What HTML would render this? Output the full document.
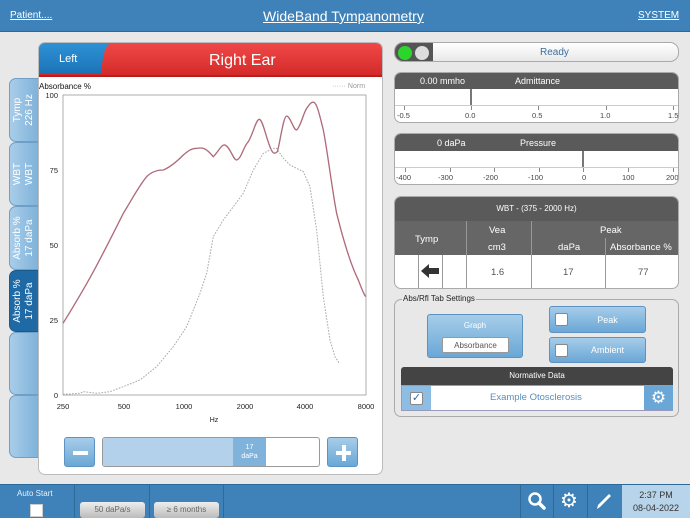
<!DOCTYPE html>
<html><head><meta charset="utf-8"><style>
*{box-sizing:border-box;margin:0;padding:0}
body{width:690px;height:518px;background:#e8e8e8;font-family:"Liberation Sans",sans-serif;position:relative;overflow:hidden;font-size:9px;color:#333}
.a{position:absolute}
.hdr{left:0;top:0;width:690px;height:32px;background:#3f82b9;border-bottom:1px solid #2b6896}
.hdr span{position:absolute;color:#fff;text-decoration:underline}
.tab{position:absolute;left:9px;width:30px;background:linear-gradient(90deg,#a9cde9,#7fb2da);border:1px solid #6f9fc6;border-radius:7px 0 0 7px;color:#fff;font-size:10px}
.tab div{position:absolute;left:50%;top:50%;transform:translate(-50%,-50%) rotate(-90deg);white-space:nowrap;text-align:center;line-height:12px}
.box{position:absolute;left:394px;width:285px;border:1px solid #aaa;border-radius:7px;background:#fff;overflow:hidden}
.dk{background:#5a5a5a;color:#fff}
.btn{position:absolute;background:linear-gradient(#a6cde9,#6aa7d6);border:1px solid #5c93c2;border-radius:3px;color:#fff;text-align:center}
.cb{position:absolute;width:13px;height:13px;background:#fff;border:1px solid #888;border-radius:2px}
.bb{background:#3f82b9}
.tk{position:absolute;top:0;width:1px;height:4px;background:#888}
</style></head><body>
<div class="a hdr"><span style="left:10px;top:10px;font-size:10px">Patient....</span><span style="left:263px;top:8px;font-size:14px">WideBand Tympanometry</span><span style="left:638px;top:10px;font-size:10px">SYSTEM</span></div>

<div class="tab" style="top:78px;height:64px"><div>Tymp<br>226 Hz</div></div>
<div class="tab" style="top:142px;height:64px"><div>WBT<br>WBT</div></div>
<div class="tab" style="top:206px;height:64px"><div>Absorb %<br>17 daPa</div></div>
<div class="tab" style="top:270px;height:62px;background:#1f6aa5;border-color:#1a5a8c"><div>Absorb %<br>17 daPa</div></div>
<div class="tab" style="top:332px;height:63px"><div></div></div>
<div class="tab" style="top:395px;height:63px"><div></div></div>

<div class="a" style="left:38px;top:42px;width:345px;height:433px;background:#fff;border:1px solid #bbb;border-radius:7px;overflow:hidden">
 <div class="a" style="left:0;top:0;width:345px;height:34px;background:linear-gradient(#f04848,#d42a2a);border-bottom:2px solid #b81e1e"></div>
 <svg class="a" style="left:0;top:0" width="100" height="32"><defs><linearGradient id="g" x1="0" y1="0" x2="0" y2="1"><stop offset="0" stop-color="#2f92d6"/><stop offset="1" stop-color="#1c74b8"/></linearGradient></defs><path d="M0,0 L72,0 C66,2 64,12 62,30 L0,30 Z" fill="url(#g)"/></svg>
 <div class="a" style="left:20px;top:10px;color:#fff;font-size:11px">Left</div>
 <div class="a" style="left:170px;top:9px;color:#fff;font-size:16px">Right Ear</div>
</div>

<div class="a" style="left:39px;top:82px;font-size:8px;color:#111">Absorbance %</div>
<div class="a" style="left:332px;top:83px;font-size:7px;color:#999">······ Norm</div>
<svg class="a" style="left:0;top:0" width="690" height="518">
<g font-family="Liberation Sans" font-size="7.5" fill="#222">
<rect x="63" y="95" width="303" height="300" fill="#fff" stroke="#999" stroke-width="0.8"/>
<text x="58" y="98" text-anchor="end">100</text><text x="58" y="173" text-anchor="end">75</text><text x="58" y="248" text-anchor="end">50</text><text x="58" y="323" text-anchor="end">25</text><text x="58" y="398" text-anchor="end">0</text>
<text x="63" y="409" text-anchor="middle">250</text><text x="124" y="409" text-anchor="middle">500</text><text x="184" y="409" text-anchor="middle">1000</text><text x="245" y="409" text-anchor="middle">2000</text><text x="305" y="409" text-anchor="middle">4000</text><text x="366" y="409" text-anchor="middle">8000</text>
<text x="214" y="422" text-anchor="middle" font-size="7">Hz</text>
</g>
<g transform="translate(40,80) scale(0.3333)" fill="none">
<path d="M69,730 C100,680 130,630 160,575 C190,520 220,460 250,400 C275,360 295,320 320,290 C335,275 350,270 370,270 C390,262 410,245 430,225 C445,212 455,205 470,205 C485,203 495,200 520,230 C535,215 545,192 555,195 C570,200 580,240 590,240 C605,235 610,200 625,185 C640,160 648,118 658,118 C668,120 675,160 688,195 C698,225 705,222 712,215 C720,190 730,108 740,108 C752,110 760,150 770,150 C782,140 790,100 800,85 C810,70 815,65 822,67 C832,72 840,110 850,150 C862,210 875,320 890,400 C910,480 935,560 955,600 C965,625 970,640 977,650" stroke="#b06a7a" stroke-width="4"/>
<path d="M69,943 L120,940 L130,935 L170,940 L210,935 L250,920 L300,900 L350,860 L400,800 L440,740 L480,640 L500,580 L520,470 L550,420 L580,380 L610,340 L640,270 L670,220 L700,205 L710,205 L730,235 L750,255 L790,275 L810,320 L830,450 L850,650 L870,780 L885,830 L898,850" stroke="#aaa" stroke-width="3" stroke-dasharray="5,4"/>
</g>
</svg>

<div class="btn" style="left:64px;top:437px;width:31px;height:30px"><div class="a" style="left:8px;top:13px;width:15px;height:4px;background:#fff"></div></div>
<div class="a" style="left:102px;top:437px;width:218px;height:30px;background:#fff;border:1px solid #999;border-radius:3px;overflow:hidden"><div class="a" style="left:0;top:0;width:130px;height:30px;background:#b3d1ea"></div><div class="a" style="left:130px;top:0;width:33px;height:30px;background:#80b3dc;color:#fff;font-size:7px;text-align:center;padding-top:5px;line-height:9px">17<br>daPa</div></div>
<div class="btn" style="left:327px;top:437px;width:31px;height:30px"><div class="a" style="left:8px;top:13px;width:15px;height:4px;background:#fff"></div><div class="a" style="left:13.5px;top:7px;width:4px;height:16px;background:#fff"></div></div>

<div class="box" style="top:42px;height:20px;border-radius:9px;background:linear-gradient(#fff,#e8e8e8)"><div class="a" style="left:0;top:0;width:38px;height:20px;background:#555"></div><div class="a" style="left:3px;top:3px;width:14px;height:14px;border-radius:50%;background:#2bd52b"></div><div class="a" style="left:20px;top:3px;width:14px;height:14px;border-radius:50%;background:#ddd"></div><div class="a" style="left:145px;top:4px;color:#3a6ea0;font-size:10px">Ready</div></div>

<div class="box" style="top:72px;height:51px"><div class="dk" style="height:16px;position:relative"><span class="a" style="left:25px;top:3px">0.00 mmho</span><span class="a" style="left:120px;top:3px">Admittance</span></div><div class="a" style="left:0;top:32px;width:285px;height:1px;background:#ccc"></div><div class="a" style="left:75px;top:16px;width:2px;height:16px;background:#777"></div>
<div class="a" style="left:0;top:33px;width:285px;height:5px"><div class="tk" style="left:9px"></div><div class="tk" style="left:76px"></div><div class="tk" style="left:143px"></div><div class="tk" style="left:211px"></div><div class="tk" style="left:278px"></div></div>
<div class="a" style="top:38px;left:2px;width:282px;font-size:7.5px;color:#444"><span class="a" style="left:0">-0.5</span><span class="a" style="left:68px">0.0</span><span class="a" style="left:135px">0.5</span><span class="a" style="left:203px">1.0</span><span class="a" style="left:271px">1.5</span></div></div>

<div class="box" style="top:133px;height:52px"><div class="dk" style="height:17px;position:relative"><span class="a" style="left:42px;top:4px">0 daPa</span><span class="a" style="left:125px;top:4px">Pressure</span></div><div class="a" style="left:0;top:33px;width:285px;height:1px;background:#ccc"></div><div class="a" style="left:187px;top:17px;width:2px;height:16px;background:#777"></div>
<div class="a" style="left:0;top:34px;width:285px;height:5px"><div class="tk" style="left:10px"></div><div class="tk" style="left:55px"></div><div class="tk" style="left:99px"></div><div class="tk" style="left:144px"></div><div class="tk" style="left:188px"></div><div class="tk" style="left:233px"></div><div class="tk" style="left:278px"></div></div>
<div class="a" style="top:39px;left:1px;width:282px;font-size:7.5px;color:#444"><span class="a" style="left:0">-400</span><span class="a" style="left:42px">-300</span><span class="a" style="left:87px">-200</span><span class="a" style="left:132px">-100</span><span class="a" style="left:186px">0</span><span class="a" style="left:226px">100</span><span class="a" style="left:270px">200</span></div></div>

<div class="box" style="top:196px;height:93px;font-size:9.5px">
<div class="dk" style="height:24px;text-align:center;padding-top:7px;font-size:8px">WBT - (375 - 2000 Hz)</div>
<div class="dk a" style="left:0;top:24px;width:285px;height:34px;background:#666"></div>
<div class="a" style="left:20px;top:37px;color:#fff">Tymp</div>
<div class="a" style="left:71px;top:24px;width:1px;height:69px;background:#999"></div>
<div class="a" style="left:136px;top:24px;width:1px;height:69px;background:#999"></div>
<div class="a" style="left:210px;top:41px;width:1px;height:52px;background:#999"></div>
<div class="a" style="left:23px;top:58px;width:1px;height:35px;background:#999"></div>
<div class="a" style="left:47px;top:58px;width:1px;height:35px;background:#999"></div>
<div class="a" style="left:94px;top:28px;color:#fff">Vea</div><div class="a" style="left:93px;top:45px;color:#fff">cm3</div>
<div class="a" style="left:205px;top:28px;color:#fff">Peak</div><div class="a" style="left:163px;top:45px;color:#fff">daPa</div><div class="a" style="left:215px;top:45px;color:#fff">Absorbance %</div>
<svg class="a" style="left:25px;top:66px" width="20" height="16"><path d="M1,8 L9,1 L9,5 L19,5 L19,11 L9,11 L9,15 Z" fill="#333"/></svg>
<div class="a" style="left:96px;top:70px;color:#555">1.6</div><div class="a" style="left:168px;top:70px;color:#555">17</div><div class="a" style="left:243px;top:70px;color:#555">77</div></div>

<div class="a" style="left:394px;top:299px;width:285px;height:118px;border:1px solid #aaa;border-radius:7px"></div>
<div class="a" style="left:402px;top:294px;background:#e8e8e8;font-size:8px;color:#222;padding:0 1px">Abs/Rfl Tab Settings</div>
<div class="btn" style="left:427px;top:314px;width:96px;height:44px"><div style="margin-top:6px;font-size:8px">Graph</div><div class="a" style="left:14px;top:22px;width:67px;height:16px;background:#fff;border:1px solid #999;border-radius:2px;color:#555;font-size:8px;padding-top:3px">Absorbance</div></div>
<div class="btn" style="left:549px;top:306px;width:97px;height:27px"><div class="cb" style="left:5px;top:6px"></div><div style="margin-top:8px;padding-left:20px;font-size:9px">Peak</div></div>
<div class="btn" style="left:549px;top:337px;width:97px;height:26px"><div class="cb" style="left:5px;top:6px"></div><div style="margin-top:7px;padding-left:20px;font-size:9px">Ambient</div></div>
<div class="a dk" style="left:401px;top:367px;width:272px;height:18px;text-align:center;padding-top:4px;font-size:8px;border-radius:3px 3px 0 0;background:#444">Normative Data</div>
<div class="a" style="left:401px;top:385px;width:272px;height:26px;background:#fff;border:1px solid #99b"><div class="a" style="left:0;top:0;width:29px;height:24px;background:#8dbde3"></div><div class="cb" style="left:8px;top:6px;color:#2a6ea8;font-size:11px;line-height:11px;text-align:center">✓</div><div class="a" style="left:88px;top:6px;color:#5a8dbd;font-size:9.5px">Example Otosclerosis</div><div class="a" style="left:242px;top:0;width:29px;height:24px;background:#6aa7d6;color:#fff;font-size:17px;text-align:center;line-height:24px">⚙</div></div>

<div class="a bb" style="left:0;top:484px;width:690px;height:34px;border-top:1px solid #2e6a98"></div>
<div class="a" style="left:74px;top:484px;width:1px;height:34px;background:#2e6a98"></div>
<div class="a" style="left:149px;top:484px;width:1px;height:34px;background:#2e6a98"></div>
<div class="a" style="left:223px;top:484px;width:1px;height:34px;background:#2e6a98"></div>
<div class="a" style="left:17px;top:489px;color:#e8f0f8;font-size:8px">Auto Start</div>
<div class="a" style="left:30px;top:504px;width:13px;height:13px;background:#fff;border:1px solid #ccc"></div>
<div class="a" style="left:80px;top:502px;width:65px;height:16px;background:linear-gradient(#eee,#bbb);border-radius:3px;color:#666;font-size:8px;text-align:center;padding-top:3px">50 daPa/s</div>
<div class="a" style="left:154px;top:502px;width:65px;height:16px;background:linear-gradient(#eee,#bbb);border-radius:3px;color:#666;font-size:8px;text-align:center;padding-top:3px">≥ 6 months</div>
<div class="a" style="left:520px;top:484px;width:1px;height:34px;background:#2e6a98"></div>
<div class="a" style="left:553px;top:484px;width:1px;height:34px;background:#2e6a98"></div>
<div class="a" style="left:587px;top:484px;width:1px;height:34px;background:#2e6a98"></div>
<svg class="a" style="left:527px;top:491px" width="20" height="20"><circle cx="8" cy="8" r="5.5" fill="none" stroke="#fff" stroke-width="2.5"/><path d="M12,12 L17,17" stroke="#fff" stroke-width="3.5" stroke-linecap="round"/></svg>
<div class="a" style="left:560px;top:488px;color:#fff;font-size:20px">⚙</div>
<svg class="a" style="left:594px;top:490px" width="20" height="22"><path d="M3,19 L4,15 L15,4 L17,6 L6,17 Z" fill="#fff"/></svg>
<div class="a" style="left:622px;top:485px;width:68px;height:33px;background:#b8d4ea;color:#333;font-size:9px;text-align:center;padding-top:4px;line-height:13px">2:37 PM<br>08-04-2022</div>
</body></html>
